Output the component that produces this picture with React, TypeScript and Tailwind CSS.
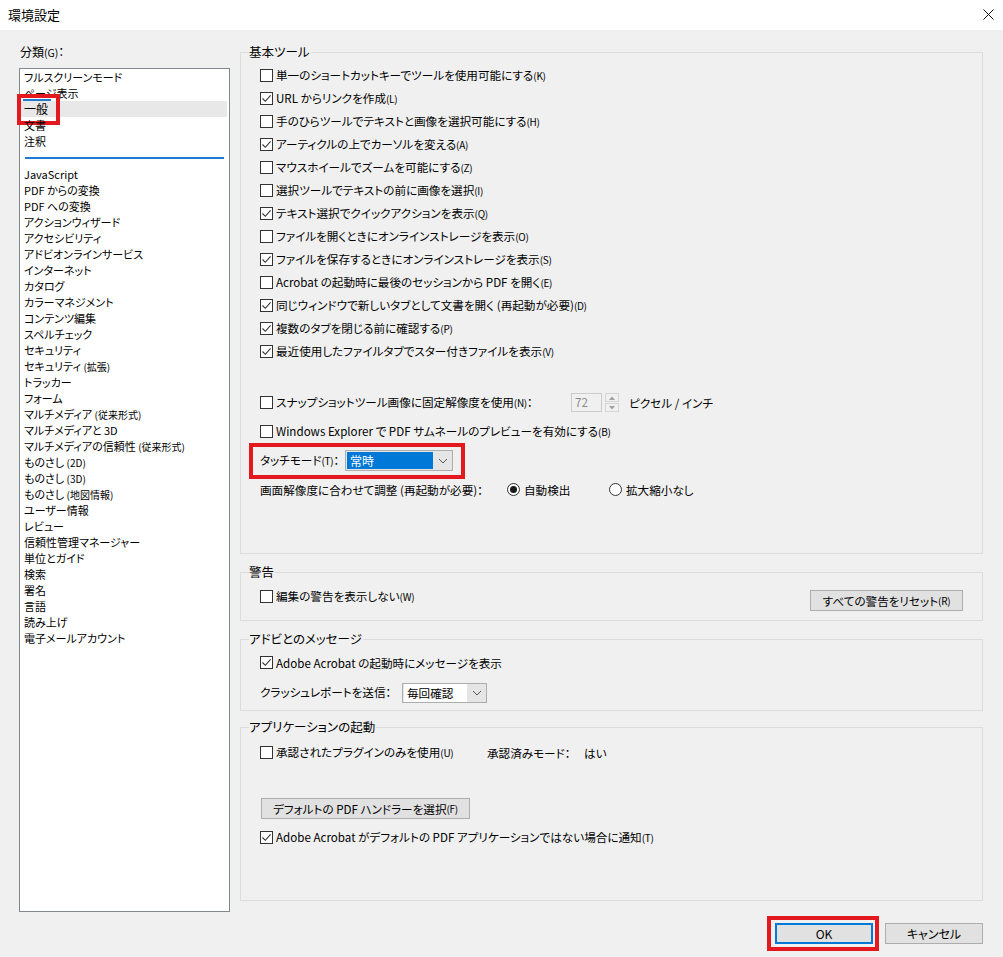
import React from 'react';

type Row = { text: string; key: string; checked: boolean };

const basicRows: Row[] = [
  { text: '単一のショートカットキーでツールを使用可能にする', key: 'K', checked: false },
  { text: 'URL からリンクを作成', key: 'L', checked: true },
  { text: '手のひらツールでテキストと画像を選択可能にする', key: 'H', checked: false },
  { text: 'アーティクルの上でカーソルを変える', key: 'A', checked: true },
  { text: 'マウスホイールでズームを可能にする', key: 'Z', checked: false },
  { text: '選択ツールでテキストの前に画像を選択', key: 'I', checked: false },
  { text: 'テキスト選択でクイックアクションを表示', key: 'Q', checked: true },
  { text: 'ファイルを開くときにオンラインストレージを表示', key: 'O', checked: false },
  { text: 'ファイルを保存するときにオンラインストレージを表示', key: 'S', checked: true },
  { text: 'Acrobat の起動時に最後のセッションから PDF を開く', key: 'E', checked: false },
  { text: '同じウィンドウで新しいタブとして文書を開く (再起動が必要)', key: 'D', checked: true },
  { text: '複数のタブを閉じる前に確認する', key: 'P', checked: true },
  { text: '最近使用したファイルタブでスター付きファイルを表示', key: 'V', checked: true },
];

const topItems = ['フルスクリーンモード', 'ページ表示', '一般', '文書', '注釈'];
const bottomItems = [
  'JavaScript', 'PDF からの変換', 'PDF への変換', 'アクションウィザード', 'アクセシビリティ',
  'アドビオンラインサービス', 'インターネット', 'カタログ', 'カラーマネジメント', 'コンテンツ編集',
  'スペルチェック', 'セキュリティ', 'セキュリティ (拡張)', 'トラッカー', 'フォーム',
  'マルチメディア (従来形式)', 'マルチメディアと 3D', 'マルチメディアの信頼性 (従来形式)',
  'ものさし (2D)', 'ものさし (3D)', 'ものさし (地図情報)', 'ユーザー情報', 'レビュー',
  '信頼性管理マネージャー', '単位とガイド', '検索', '署名', '言語', '読み上げ', '電子メールアカウント',
];

const Check = ({ checked }: { checked: boolean }) => (
  <span className="w-[13px] h-[13px] border border-[#333333] bg-white flex items-center justify-center shrink-0">
    {checked && (
      <svg width="11" height="11" viewBox="0 0 11 11">
        <path d="M1.5 5.5 L4.3 8.3 L9.6 2.4" stroke="#333" strokeWidth="1.1" fill="none" />
      </svg>
    )}
  </span>
);

const Radio = ({ on }: { on: boolean }) => (
  <span className="w-[13px] h-[13px] rounded-full border border-[#333333] bg-white flex items-center justify-center shrink-0">
    {on && <span className="w-[7px] h-[7px] rounded-full bg-[#1a1a1a]" />}
  </span>
);

// list text: parenthesised part drawn a bit smaller, like the original
const ListText = ({ t }: { t: string }) => {
  const i = t.indexOf(' (');
  if (i < 0) return <>{t}</>;
  return (
    <>
      {t.slice(0, i)} <span className="text-[10px]">{t.slice(i + 1)}</span>
    </>
  );
};

const Key = ({ k }: { k: string }) => (k ? <span className="text-[10px] tracking-[-0.3px]">({k})</span> : null);

const CheckRow = ({ text, k, checked, h = 'h-[23px]' }: { text: string; k: string; checked: boolean; h?: string }) => (
  <div className={`flex items-center ${h}`}>
    <Check checked={checked} />
    <span className="ml-[3px] whitespace-nowrap">
      {text}
      <Key k={k} />
    </span>
  </div>
);

const Group = ({ title, h, className = '', children }: { title: string; h: string; className?: string; children: React.ReactNode }) => (
  <div className={`relative border border-[#dcdcdc] ${h} ${className}`}>
    <div className="absolute left-[8px] top-[-10px] leading-[18px] bg-[#f0f0f0] pr-[1px] text-[12.5px]">{title}</div>
    {children}
  </div>
);

const Btn = ({ children, className = '' }: { children: React.ReactNode; className?: string }) => (
  <div className={`h-[21px] bg-[#e1e1e1] border border-[#adadad] flex items-center justify-center whitespace-nowrap ${className}`}>
    {children}
  </div>
);

const Chevron = () => (
  <svg width="10" height="6" viewBox="0 0 10 6">
    <path d="M1 1 L5 5 L9 1" stroke="#555" strokeWidth="1" fill="none" />
  </svg>
);

const App: React.FC = () => {
  return (
    <div className="w-[1003px] h-[957px] bg-[#f0f0f0] text-black text-[12px] leading-[16px] font-['Noto_Sans_CJK_JP','Noto_Sans',sans-serif] [font-feature-settings:'palt'] overflow-hidden">
      {/* title bar */}
      <div className="h-[30px] bg-white flex items-center justify-between pl-[8px] pr-[9px]">
        <span className="text-[13px]">環境設定</span>
        <svg width="11" height="11" viewBox="0 0 11 11" className="mb-[2px]">
          <path d="M0.5 0.5 L10.5 10.5 M10.5 0.5 L0.5 10.5" stroke="#111" strokeWidth="1" />
        </svg>
      </div>

      <div className="flex pl-[19px]">
        {/* categories */}
        <div className="w-[211px]">
          <div className="mt-[14px] ml-[1px] h-[16px]">
            分類<span className="text-[10.5px]">(G)</span>：
          </div>
          <div className="mt-[8px] h-[844px] border border-[#828790] bg-white text-[11px]">
            {topItems.map((t) => (
              <div
                key={t}
                className={`relative h-[16px] pl-[4px] whitespace-nowrap ${t === '一般' ? 'bg-[#e8e8e8] mr-[2px] text-[12px]' : ''}`}
              >
                {t}
                {t === '一般' && (
                  <>
                    <div className="absolute left-[3px] top-[-2px] w-[28px] h-[2px] bg-[#1f7ad1]" />
                    <div className="absolute left-[-3px] top-[-7px] w-[43px] h-[31px] border-[4px] border-[#e3191f]" />
                  </>
                )}
              </div>
            ))}
            <div className="mt-[8px] mb-[7px] mx-[5px] h-[2px] bg-[#1f7ad1]" />
            {bottomItems.map((t) => (
              <div key={t} className="h-[16px] pl-[4px] whitespace-nowrap">
                <ListText t={t} />
              </div>
            ))}
          </div>
        </div>

        {/* settings */}
        <div className="ml-[10px] w-[743px] mt-[22px] text-[11.6px]">
          <Group title="基本ツール" h="h-[502px]">
            <div className="pl-[19px] pt-[11px]">
              {basicRows.map((r) => (
                <CheckRow key={r.key} text={r.text} k={r.key} checked={r.checked} />
              ))}
              <div className="mt-[25px] flex items-center h-[29px]">
                <Check checked={false} />
                <span className="ml-[3px] w-[295px] whitespace-nowrap">
                  スナップショットツール画像に固定解像度を使用<Key k="N" />：
                </span>
                <div className="w-[31px] h-[19px] border border-[#cccccc] bg-[#f0f0f0] text-[#8a8a8a] pl-[3px] leading-[17px]">72</div>
                <div className="ml-[3px] w-[14px] h-[19px] flex flex-col gap-[1px]">
                  <div className="h-[9px] border border-[#d6d6d6] flex items-center justify-center">
                    <svg width="6" height="4" viewBox="0 0 6 4"><path d="M0 4 L3 0.5 L6 4Z" fill="#a0a0a0" /></svg>
                  </div>
                  <div className="h-[9px] border border-[#d6d6d6] flex items-center justify-center">
                    <svg width="6" height="4" viewBox="0 0 6 4"><path d="M0 0 L3 3.5 L6 0Z" fill="#a0a0a0" /></svg>
                  </div>
                </div>
                <span className="ml-[10px]">ピクセル / インチ</span>
              </div>
              <CheckRow text="Windows Explorer で PDF サムネールのプレビューを有効にする" k="B" checked={false} h="h-[29px]" />
              <div className="relative flex items-center h-[29px]">
                <div className="absolute left-[-11px] top-[-3px] w-[216px] h-[36px] border-[4px] border-[#e3191f]" />
                <span className="w-[85px] whitespace-nowrap">
                  タッチモード<Key k="T" />：
                </span>
                <div className="w-[108px] h-[21px] border border-[#adadad] bg-[#e5e5e5] flex items-center pl-[1px]">
                  <div className="w-[86px] h-[17px] bg-[#0078d7] text-white pl-[3px] leading-[17px] text-[12px]">常時</div>
                  <div className="flex-1 flex justify-center">
                    <Chevron />
                  </div>
                </div>
              </div>
              <div className="flex items-center h-[29px]">
                <span className="w-[247px] whitespace-nowrap">画面解像度に合わせて調整 (再起動が必要)：</span>
                <Radio on />
                <span className="ml-[4px] w-[85px]">自動検出</span>
                <Radio on={false} />
                <span className="ml-[4px]">拡大縮小なし</span>
              </div>
            </div>
          </Group>

          <Group title="警告" h="h-[49px]" className="mt-[18px]">
            <div className="pl-[19px] pr-[19px] pt-[12px] flex items-start justify-between">
              <CheckRow text="編集の警告を表示しない" k="W" checked={false} />
              <Btn className="w-[153px] mt-[5px]">
                すべての警告をリセット<Key k="R" />
              </Btn>
            </div>
          </Group>

          <Group title="アドビとのメッセージ" h="h-[72px]" className="mt-[18px]">
            <div className="pl-[19px] pt-[11px]">
              <CheckRow text="Adobe Acrobat の起動時にメッセージを表示" k="" checked />
              <div className="mt-[6px] flex items-center h-[23px]">
                <span className="w-[142px] whitespace-nowrap">クラッシュレポートを送信：</span>
                <div className="w-[85px] h-[20px] mt-[3px] border border-[#adadad] bg-[#e5e5e5] flex items-center pl-[1px]">
                  <div className="w-[63px] h-[18px] bg-white pl-[3px] leading-[18px]">毎回確認</div>
                  <div className="flex-1 flex justify-center">
                    <Chevron />
                  </div>
                </div>
              </div>
            </div>
          </Group>

          <Group title="アプリケーションの起動" h="h-[174px]" className="mt-[16px]">
            <div className="pl-[19px] pt-[13px]">
              <div className="flex items-center h-[23px]">
                <div className="w-[227px]">
                  <CheckRow text="承認されたプラグインのみを使用" k="U" checked={false} />
                </div>
                <span className="w-[97px]">承認済みモード：</span>
                <span>はい</span>
              </div>
              <Btn className="w-[209px] mt-[34px] ml-[1px]">
                デフォルトの PDF ハンドラーを選択<Key k="F" />
              </Btn>
              <div className="mt-[7px]">
                <CheckRow text="Adobe Acrobat がデフォルトの PDF アプリケーションではない場合に通知" k="T" checked />
              </div>
            </div>
          </Group>
        </div>
      </div>

      {/* dialog buttons */}
      <div className="mt-[11px] flex justify-end gap-[12px] pr-[20px]">
        <div className="relative">
          <div className="absolute left-[-8px] top-[-7px] w-[112px] h-[35px] border-[4px] border-[#e3191f]" />
          <div className="w-[98px] h-[21px] bg-[#e1e1e1] border-2 border-[#0078d7] flex items-center justify-center">OK</div>
        </div>
        <Btn className="w-[98px]">キャンセル</Btn>
      </div>
    </div>
  );
};

export default App;
